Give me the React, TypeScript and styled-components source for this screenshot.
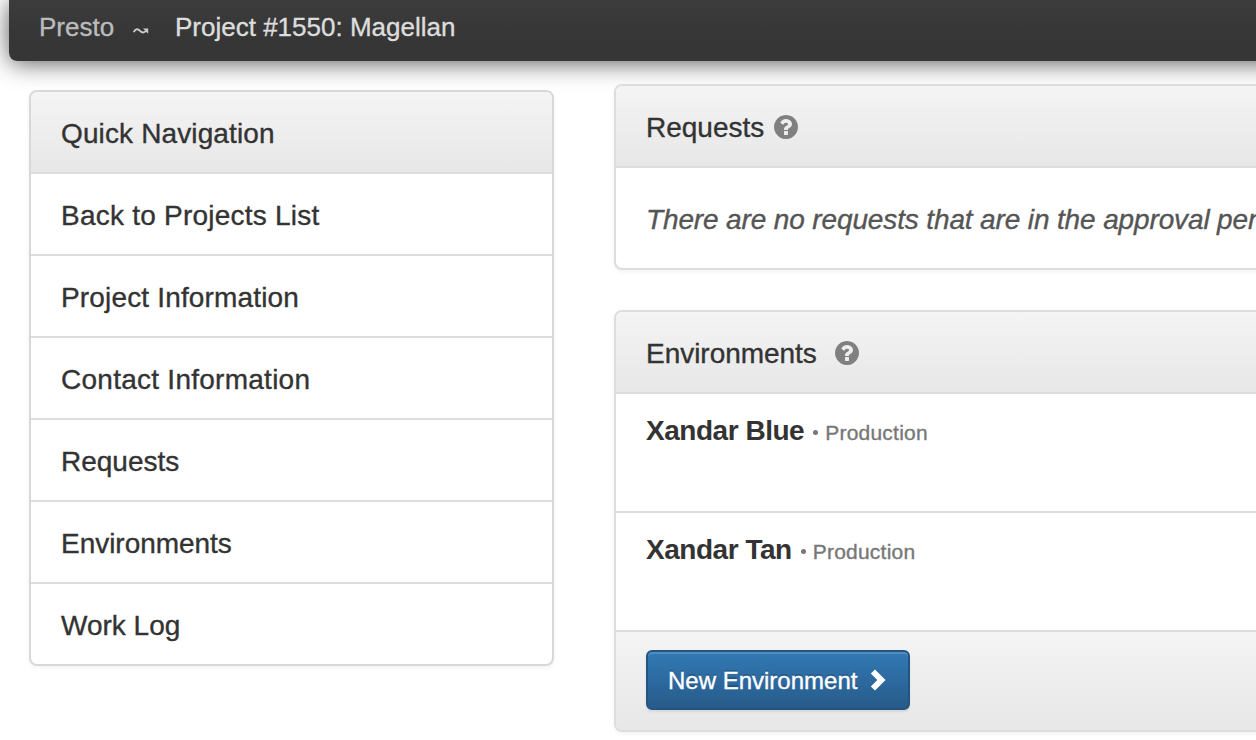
import React from "react";
import styled, { createGlobalStyle } from "styled-components";

const Global = createGlobalStyle`
  * { box-sizing: border-box; }
  html, body { margin: 0; background: #fff; }
  body {
    overflow: hidden;
    font-family: "Liberation Sans", Arial, sans-serif;
    font-size: 28px;
    line-height: 40px;
    color: #333;
    -webkit-text-stroke: 0.35px currentColor;
  }
`;

const Page = styled.div`
  width: 1256px;
  height: 740px;
  overflow: hidden;
`;

const Navbar = styled.header`
  display: flex;
  align-items: flex-start;
  height: 61px;
  margin: 0 -40px 0 9px;
  padding: 7px 0 0 30px;
  border-bottom-left-radius: 8px;
  background: linear-gradient(#3c3c3c, #363636 60%);
  box-shadow: 0 2px 24px rgba(0, 0, 0, 0.65);
  font-size: 26px;
  white-space: nowrap;
`;

const Brand = styled.span`
  width: 94px;
  color: #bbb;
`;

const Squiggle = styled.svg`
  width: 16px;
  height: 8px;
  margin: 20px 26px 0 0;
`;

const PageTitle = styled.span`
  color: #ddd;
`;

const Columns = styled.main`
  display: flex;
  align-items: flex-start;
  gap: 60px;
  padding: 23px 0 0 29px;
`;

const Panel = styled.section`
  border: 2px solid #ddd;
  border-radius: 8px;
  background: #fff;
  box-shadow: 0 2px 4px rgba(0, 0, 0, 0.05);
  overflow: hidden;
`;

const Sidebar = styled(Panel)`
  flex: none;
  width: 525px;
  margin-top: 6px;
  border-color: #d8d8d8;
`;

const Content = styled.div`
  flex: none;
  display: flex;
  flex-direction: column;
  gap: 40px;
  width: 800px;
`;

const PanelHeader = styled.div`
  display: flex;
  align-items: center;
  height: 82px;
  padding: 2px 30px 0;
  border-bottom: 2px solid #ddd;
  background: linear-gradient(#f4f4f4, #e7e7e7);
`;

const NavItem = styled.a`
  display: flex;
  align-items: center;
  height: 82px;
  padding: 2px 30px 0;
  border-bottom: 2px solid #ddd;
  &:last-child { height: 80px; border-bottom: 0; }
`;

const Text = styled.span<{ $track?: number }>`
  padding-top: 2px;
  letter-spacing: ${(p) => p.$track ?? 0}px;
  white-space: nowrap;
`;

const EmptyMessage = styled.p`
  margin: 0;
  padding: 32px 30px 28px;
  color: #555;
  font-style: italic;
  letter-spacing: -0.135px;
  white-space: nowrap;
`;

const EnvironmentRow = styled.div`
  display: flex;
  align-items: baseline;
  height: 119px;
  padding: 17px 30px 0;
  border-bottom: 2px solid #ddd;
`;

const EnvironmentName = styled.strong`
  font-weight: 700;
  letter-spacing: -0.47px;
  -webkit-text-stroke: 0;
`;

const EnvironmentKind = styled.small`
  margin-left: 4px;
  color: #777;
  font-size: 21px;
  letter-spacing: 0.22px;
`;

const Bullet = styled.span`
  display: inline-block;
  width: 5px;
  height: 5px;
  margin: 0 7px 5px 5px;
  border-radius: 50%;
  background: #777;
`;

const PanelFooter = styled.div`
  height: 98px;
  padding: 18px 30px;
  background: linear-gradient(#f4f4f4, #e7e7e7);
`;

const Button = styled.button`
  display: flex;
  align-items: center;
  width: 264px;
  height: 60px;
  padding: 0 0 0 20px;
  border: 2px solid #245580;
  border-radius: 6px;
  background: linear-gradient(#337ab7, #265a88);
  background-origin: border-box;
  box-shadow: inset 0 2px 0 rgba(255, 255, 255, 0.15), 0 2px 2px rgba(0, 0, 0, 0.075);
  color: #fff;
  font: 24px/36px "Liberation Sans", Arial, sans-serif;
  text-shadow: 0 -2px 0 rgba(0, 0, 0, 0.2);
`;

const ButtonLabel = styled.span`
  padding-top: 2px;
`;

const Chevron = styled.svg`
  width: 16px;
  height: 22px;
  margin-left: 12.500px;
`;

const HelpSvg = styled.svg<{ $gap: number }>`
  width: 24px;
  height: 24px;
  margin-left: ${(p) => p.$gap}px;
  fill: #808080;
`;

const HelpIcon = ({ gap }: { gap: number }) => (
  <HelpSvg $gap={gap} viewBox="128 128 1536 1536">
    <path d="M1024 1376v-192q0-14-9-23t-23-9h-192q-14 0-23 9t-9 23v192q0 14 9 23t23 9h192q14 0 23-9t9-23zm256-672q0-88-55.500-163t-138.500-116-170-41q-243 0-371 213-15 24 8 42l132 100q7 6 19 6 16 0 25-12 53-68 86-92 34-24 86-24 48 0 85.500 26t37.500 59q0 38-20 61t-68 45q-63 28-115.500 86.500t-52.500 125.500v36q0 14 9 23t23 9h192q14 0 23-9t9-23q0-19 21.500-49.500t54.500-49.500q32-18 49-28.500t46-35 44.500-48 28-60.500 12.500-81zm384 192q0 209-103 385.500t-279.500 279.500-385.500 103-385.500-103-279.500-279.500-103-385.500 103-385.500 279.500-279.500 385.500-103 385.500 103 279.500 279.500 103 385.500z" />
  </HelpSvg>
);

const links: [string, number][] = [
  ["Back to Projects List", 0.23],
  ["Project Information", 0.16],
  ["Contact Information", 0.26],
  ["Requests", 0],
  ["Environments", -0.03],
  ["Work Log", 0],
];

const environments = ["Xandar Blue", "Xandar Tan"];

export default function App() {
  return (
    <Page>
      <Global />
      <Navbar>
        <Brand>Presto</Brand>
        <Squiggle viewBox="0 0 16 8">
          <path d="M.8 5.200C2 2 4.500 1.200 7 3.800s5 2.200 7-1.300" fill="none" stroke="#ccc" strokeWidth="1.900" />
          <path d="M10 1.500h5.200v5.300z" fill="#ccc" />
        </Squiggle>
        <PageTitle>Project #1550: Magellan</PageTitle>
      </Navbar>
      <Columns>
        <Sidebar as="nav">
          <PanelHeader><Text $track={0.13}>Quick Navigation</Text></PanelHeader>
          {links.map(([label, track]) => (
            <NavItem key={label}><Text $track={track}>{label}</Text></NavItem>
          ))}
        </Sidebar>
        <Content>
          <Panel>
            <PanelHeader><Text>Requests</Text><HelpIcon gap={10} /></PanelHeader>
            <EmptyMessage>There are no requests that are in the approval pending state.</EmptyMessage>
          </Panel>
          <Panel>
            <PanelHeader><Text $track={-0.03}>Environments</Text><HelpIcon gap={18} /></PanelHeader>
            {environments.map((name) => (
              <EnvironmentRow key={name}>
                <EnvironmentName>{name}</EnvironmentName>
                <EnvironmentKind><Bullet />Production</EnvironmentKind>
              </EnvironmentRow>
            ))}
            <PanelFooter>
              <Button>
                <ButtonLabel>New Environment</ButtonLabel>
                <Chevron viewBox="0 0 16 22">
                  <path d="M.8 4.500 5 .4 15.500 11 5 21.600.8 17.500 7.300 11z" fill="#fff" />
                </Chevron>
              </Button>
            </PanelFooter>
          </Panel>
        </Content>
      </Columns>
    </Page>
  );
}
